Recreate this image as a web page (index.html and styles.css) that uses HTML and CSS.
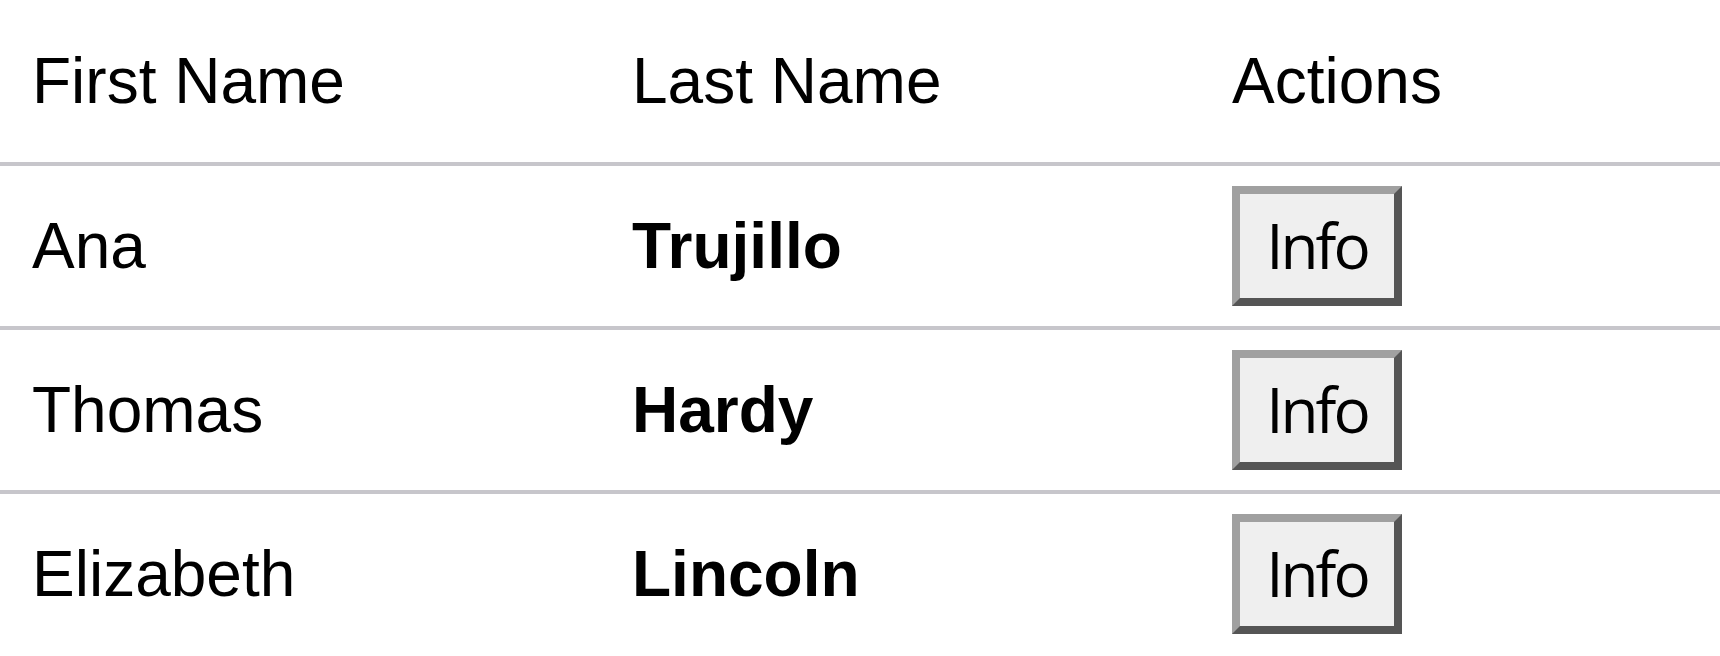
FILE: index.html
```html
<!DOCTYPE html>
<html lang="en">
<head>
<meta charset="utf-8">
<title>People</title>
<link rel="stylesheet" href="styles.css">
</head>
<body>
<table class="people">
  <colgroup>
    <col class="col-first">
    <col class="col-last">
    <col class="col-actions">
  </colgroup>
  <thead>
    <tr>
      <th>First Name</th>
      <th>Last Name</th>
      <th>Actions</th>
    </tr>
  </thead>
  <tbody>
    <tr>
      <td>Ana</td>
      <td class="last">Trujillo</td>
      <td><button class="info-btn" type="button">Info</button></td>
    </tr>
    <tr>
      <td>Thomas</td>
      <td class="last">Hardy</td>
      <td><button class="info-btn" type="button">Info</button></td>
    </tr>
    <tr>
      <td>Elizabeth</td>
      <td class="last">Lincoln</td>
      <td><button class="info-btn" type="button">Info</button></td>
    </tr>
  </tbody>
</table>
</body>
</html>
```
FILE: styles.css
```css
html, body {
  margin: 0;
  padding: 0;
  background: #ffffff;
}

body {
  font-family: "Liberation Sans", Arial, sans-serif;
  color: #000000;
}

.people {
  width: 100%;
  table-layout: fixed;
  border-collapse: separate;
  border-spacing: 0;
  font-size: 64px;
}

.col-first,
.col-last {
  width: 600px;
}

.people th,
.people td {
  text-align: left;
  vertical-align: middle;
  border-bottom: 4px solid #c7c6cb;
  white-space: nowrap;
}

.people tbody tr:last-child td {
  border-bottom: none;
}

.people th {
  font-weight: normal;
  padding: 44px 32px;
  line-height: 74px;
}

.people td {
  padding: 20px 32px;
  line-height: 74px;
}

.people td.last {
  font-weight: bold;
}

.info-btn {
  display: block;
  box-sizing: border-box;
  width: 170px;
  height: 120px;
  margin: 0;
  padding: 0 0 2px 0;
  background: #efefef;
  border-width: 8px;
  border-style: solid;
  border-color: #a0a0a0 #555555 #555555 #a0a0a0;
  font-family: "Open Sans", "Noto Sans", sans-serif;
  font-size: 62px;
  letter-spacing: -3px;
  line-height: 1;
  color: #000000;
  text-align: center;
}
```
